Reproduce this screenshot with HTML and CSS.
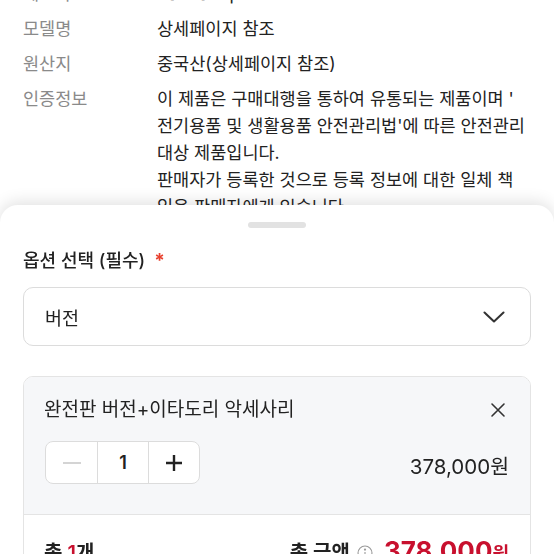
FILE: index.html
```html
<!DOCTYPE html>
<html lang="ko">
<head>
  <meta charset="UTF-8">
  <meta name="viewport" content="width=device-width, initial-scale=1.0">
  <title>옵션 선택</title>
  <link rel="stylesheet" href="styles.css">
</head>
<body>
  <div class="spec">
    <div class="spec-row">
      <span class="spec-label">제조자</span>
      <span class="spec-value">Bandai Spirits</span>
    </div>
    <div class="spec-row">
      <span class="spec-label">모델명</span>
      <span class="spec-value">상세페이지 참조</span>
    </div>
    <div class="spec-row">
      <span class="spec-label">원산지</span>
      <span class="spec-value">중국산(상세페이지 참조)</span>
    </div>
    <div class="spec-row">
      <span class="spec-label">인증정보</span>
      <span class="spec-value">이 제품은 구매대행을 통하여 유통되는 제품이며 '<br>전기용품 및 생활용품 안전관리법'에 따른 안전관리<br>대상 제품입니다.<br>판매자가 등록한 것으로 등록 정보에 대한 일체 책<br>임은 판매자에게 있습니다.</span>
    </div>
  </div>

  <div class="sheet">
    <div class="handle"></div>

    <h2 class="sheet-title">옵션 선택 (필수)<span class="required">*</span></h2>

    <div class="select">
      <span>버전</span>
      <svg width="22" height="12" viewBox="0 0 22 12" fill="none" stroke="#333" stroke-width="2" stroke-linecap="round" stroke-linejoin="round">
        <path d="M1.5 1.5 L11 10.5 L20.5 1.5"/>
      </svg>
    </div>

    <div class="option-card">
      <div class="option-body">
        <div class="option-head">
          <span>완전판 버전+이타도리 악세사리</span>
          <svg class="close" width="16" height="16" viewBox="0 0 16 16" fill="none" stroke="#333" stroke-width="1.6" stroke-linecap="round">
            <path d="M2 2 L14 14 M14 2 L2 14"/>
          </svg>
        </div>
        <div class="option-foot">
          <div class="stepper">
            <span class="step"><span class="minus"></span></span>
            <span class="step count">1</span>
            <span class="step">
              <svg width="18" height="18" viewBox="0 0 18 18" fill="none" stroke="#222" stroke-width="2.4">
                <path d="M9 1 V17 M1 9 H17"/>
              </svg>
            </span>
          </div>
          <span class="price">378,000원</span>
        </div>
      </div>
      <div class="total">
        <span class="total-count">총 <em>1</em>개</span>
        <span class="total-sum">
          총 금액
          <svg class="info" width="16" height="16" viewBox="0 0 16 16" fill="none" stroke="#999" stroke-width="1.1">
            <circle cx="8" cy="8" r="7"/>
            <path d="M8 7 V12"/>
            <circle cx="8" cy="4.6" r="0.6" fill="#999"/>
          </svg>
          <strong>378,000<small>원</small></strong>
        </span>
      </div>
    </div>
  </div>
</body>
</html>
```

FILE: styles.css
```css
/* General */
body {
  margin: 0;
  font-family: "Inter", "Noto Sans CJK KR", sans-serif;
  color: #222;
  background: #fff;
}

/* Spec list behind the sheet */
.spec {
  margin-top: -20.5px;
  padding: 0 23px;
  display: flex;
  flex-direction: column;
  gap: 8px;
  font-size: 17.5px;
  line-height: 27px;
}

.spec-row {
  display: grid;
  grid-template-columns: 134px 1fr;
}

.spec-label {
  color: #8a8a8a;
}

.spec-value {
  white-space: nowrap;
}

/* Bottom sheet */
.sheet {
  position: fixed;
  top: 205px;
  left: 0;
  right: 0;
  bottom: 0;
  padding: 17px 23px 0;
  background: #fff;
  border-radius: 18px 18px 0 0;
  box-shadow: 0 -3px 16px rgba(0, 0, 0, 0.12);
}

.handle {
  width: 58px;
  height: 6px;
  margin: 0 auto;
  border-radius: 3px;
  background: #e2e2e2;
}

.sheet-title {
  margin: 20px 0 0;
  font-size: 18px;
  line-height: 26px;
  font-weight: 500;
}

.required {
  margin-left: 9px;
  font-size: 19px;
  font-weight: 700;
  color: #e8412f;
}

.select {
  margin-top: 13px;
  height: 59px;
  box-sizing: border-box;
  padding: 0 25px 0 21px;
  display: flex;
  align-items: center;
  justify-content: space-between;
  border: 1px solid #dcdcdc;
  border-radius: 10px;
  font-size: 18.5px;
}

/* Selected option */
.option-card {
  margin-top: 30px;
  border: 1px solid #e4e4e4;
  border-radius: 10px;
  overflow: hidden;
}

.option-body {
  padding: 20px 21px 30px 20px;
  background: #f6f7f9;
  border-bottom: 1px solid #e4e4e4;
}

.option-head {
  display: flex;
  align-items: center;
  justify-content: space-between;
  font-size: 19px;
  line-height: 26px;
}

.close {
  margin-right: 3px;
}

.option-foot {
  margin-top: 18px;
  display: flex;
  align-items: center;
  justify-content: space-between;
}

.stepper {
  margin-left: 1px;
  width: 155px;
  height: 43px;
  box-sizing: border-box;
  display: grid;
  grid-template-columns: repeat(3, 1fr);
  border: 1px solid #dcdcdc;
  border-radius: 8px;
  background: #fff;
}

.step {
  display: flex;
  align-items: center;
  justify-content: center;
}

.step + .step {
  border-left: 1px solid #dcdcdc;
}

.minus {
  width: 18px;
  height: 2px;
  background: #d4d4d4;
}

.count {
  font-size: 18px;
  font-weight: 600;
}

.price {
  padding-top: 4px;
  font-size: 20.5px;
}

/* Totals */
.total {
  padding: 20px 21px 0 20px;
  display: flex;
  align-items: baseline;
  justify-content: space-between;
  background: #fff;
  font-size: 20px;
  font-weight: 600;
}

.total-count em {
  font-style: normal;
  color: #c8102e;
}

.info {
  margin: 0 6px 0 2px;
  vertical-align: -1px;
}

.total-sum strong {
  font-size: 26px;
  font-weight: 700;
  color: #c8102e;
}

.total-sum small {
  font-size: 18px;
}
```
